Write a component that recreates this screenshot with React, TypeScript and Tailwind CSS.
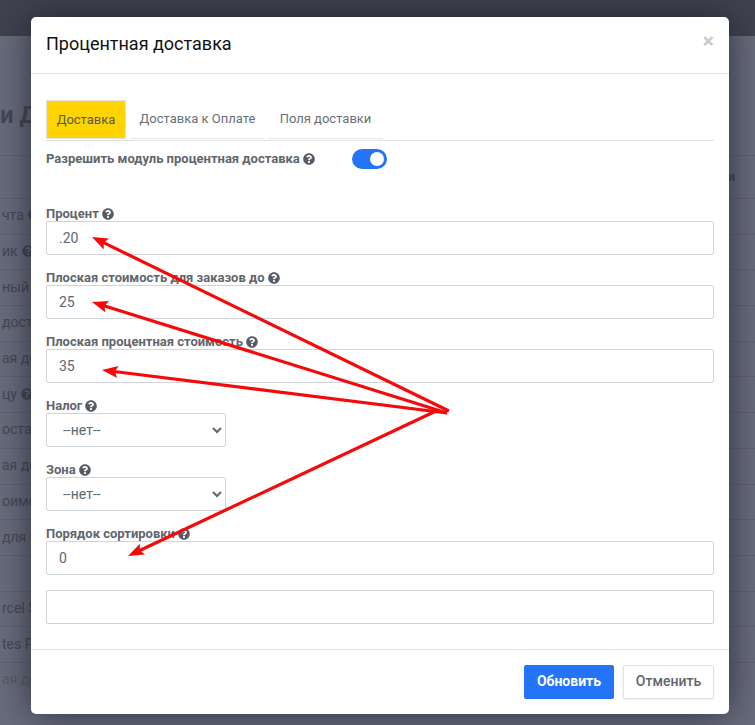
import { FaQuestionCircle } from 'react-icons/fa'

const backdropRows = ['чта', 'ик', 'ный', 'дост', 'ая до', 'цу', 'остав', 'ая до', 'оимос', 'для зо', '', 'rcel S', 'tes P', 'ая до']
const helpRows = ['чта', 'ик', 'цу']

const arrows = [
  { x1: 449, y1: 411, x2: 92, y2: 237 },
  { x1: 447, y1: 413, x2: 92, y2: 302 },
  { x1: 447, y1: 413, x2: 102, y2: 370 },
  { x1: 436, y1: 411, x2: 128, y2: 556 },
]

function Arrow({ x1, y1, x2, y2 }: { x1: number; y1: number; x2: number; y2: number }) {
  const len = Math.hypot(x1 - x2, y1 - y2)
  const ux = (x1 - x2) / len
  const uy = (y1 - y2) / len
  const at = (along: number, side: number) => `${x2 + ux * along - uy * side},${y2 + uy * along + ux * side}`
  return (
    <g>
      <line x1={x1} y1={y1} x2={x2 + ux * 10} y2={y2 + uy * 10} stroke="#f40a0a" strokeWidth="3.2" />
      <polygon points={`${at(0, 0)} ${at(16, 6)} ${at(13, 0)} ${at(16, -6)}`} fill="#f40a0a" />
    </g>
  )
}

function Label({ text }: { text: string }) {
  return (
    <label className="flex items-center gap-[3px] h-[17px] pt-[2px] text-[13px] font-bold leading-none text-[#5f666d]">
      {text}
      <FaQuestionCircle className="w-[12px] h-[12px] text-[#555c63]" />
    </label>
  )
}

function Field({ label, value }: { label: string; value: string }) {
  return (
    <div className="mb-[13px]">
      <Label text={label} />
      <input
        defaultValue={value}
        className="block w-full h-[34px] px-3 border border-[#ced4da] rounded-[2px] text-sm text-[#61676d] outline-none"
      />
    </div>
  )
}

function SelectField({ label }: { label: string }) {
  return (
    <div className="mb-[13px]">
      <Label text={label} />
      <select className="block w-[180px] h-[34px] px-3 border border-[#ced4da] rounded-[2px] text-sm text-[#61676d] bg-white outline-none">
        <option>--нет--</option>
      </select>
    </div>
  )
}

export default function App() {
  return (
    <div className="relative w-[755px] h-[725px] overflow-hidden bg-[#696c7b] font-['Roboto',sans-serif]">
      {/* page behind the dialog */}
      <div className="h-[36px] bg-[#40434f]" />
      <div className="h-[119px] pt-[64px] text-2xl font-bold leading-[30px] text-[#454855]">и Д</div>
      <div className="border-t border-[#5f6270]">
        <div className="h-[42px] flex items-center justify-end pr-[20px] text-[13px] font-bold text-[#454855]">и</div>
        {backdropRows.map((row, i) => (
          <div
            key={i}
            className={`h-[35.7px] flex items-center gap-1 pb-[2px] border-t border-[#5f6270] pl-[2px] text-sm whitespace-nowrap ${
              i === backdropRows.length - 1 ? 'text-[#585b69]' : 'text-[#454855]'
            }`}
          >
            {row}
            {helpRows.includes(row) && <FaQuestionCircle className="w-[12px] h-[12px]" />}
          </div>
        ))}
      </div>

      {/* dialog */}
      <div className="absolute left-[31px] top-[17px] w-[698px] h-[697px] flex flex-col bg-white rounded-[5px] shadow-[0_0_36px_rgba(20,22,35,0.7)]">
        <div className="h-[57px] shrink-0 flex items-center justify-between pb-[3px] px-[15px] border-b border-[#e4e7ea]">
          <h5 className="text-lg font-normal text-[#111]">Процентная доставка</h5>
          <span className="mb-[5px] text-[21px] font-bold leading-none text-[#c9c9c9]">×</span>
        </div>

        <div className="flex-1 px-[15px] pt-[26px]">
          <div className="flex h-[41px] border-b border-[#dee2e6]">
            <div className="w-[80px] h-[39px] flex items-center justify-center bg-[#ffd400] border border-[#e3e3e3] text-[13px] text-[#5b5b45]">
              Доставка
            </div>
            <div className="ml-[4px] w-[135px] h-[39px] flex items-center justify-center border-b border-[#e4e7ea] text-[13px] text-[#6a7077]">
              Доставка к Оплате
            </div>
            <div className="ml-[3px] w-[115px] h-[39px] flex items-center justify-center border-b border-[#e4e7ea] text-[13px] text-[#6a7077]">
              Поля доставки
            </div>
          </div>

          <div className="flex items-start h-[63px] pt-[8px]">
            <div className="w-[306px]">
              <Label text="Разрешить модуль процентная доставка" />
            </div>
            <div className="w-[35px] h-[20px] p-[3px] flex justify-end rounded-full bg-[#2374f7]">
              <div className="w-[14px] h-[14px] rounded-full bg-white" />
            </div>
          </div>

          <Field label="Процент" value=".20" />
          <Field label="Плоская стоимость для заказов до" value="25" />
          <Field label="Плоская процентная стоимость" value="35" />
          <SelectField label="Налог" />
          <SelectField label="Зона" />
          <Field label="Порядок сортировки" value="0" />
          <input className="block w-full h-[34px] mt-[15px] px-3 border border-[#ced4da] rounded-[2px] outline-none" />
        </div>

        <div className="h-[65px] shrink-0 flex items-start justify-end gap-[9px] pt-[15px] pr-[15px] border-t border-[#e4e7ea]">
          <button className="w-[90px] h-[34px] pb-[2px] rounded-[2px] bg-[#2374f7] text-sm font-bold text-white">Обновить</button>
          <button className="w-[91px] h-[34px] pb-[2px] rounded-[2px] bg-white border border-[#e0e3e6] shadow-[0_1px_2px_rgba(0,0,0,0.08)] text-sm font-medium text-[#5f666d]">
            Отменить
          </button>
        </div>
      </div>

      {/* annotation arrows drawn over the screenshot */}
      <svg className="absolute inset-0 pointer-events-none" width="755" height="725">
        {arrows.map((a, i) => (
          <Arrow key={i} {...a} />
        ))}
      </svg>
    </div>
  )
}
